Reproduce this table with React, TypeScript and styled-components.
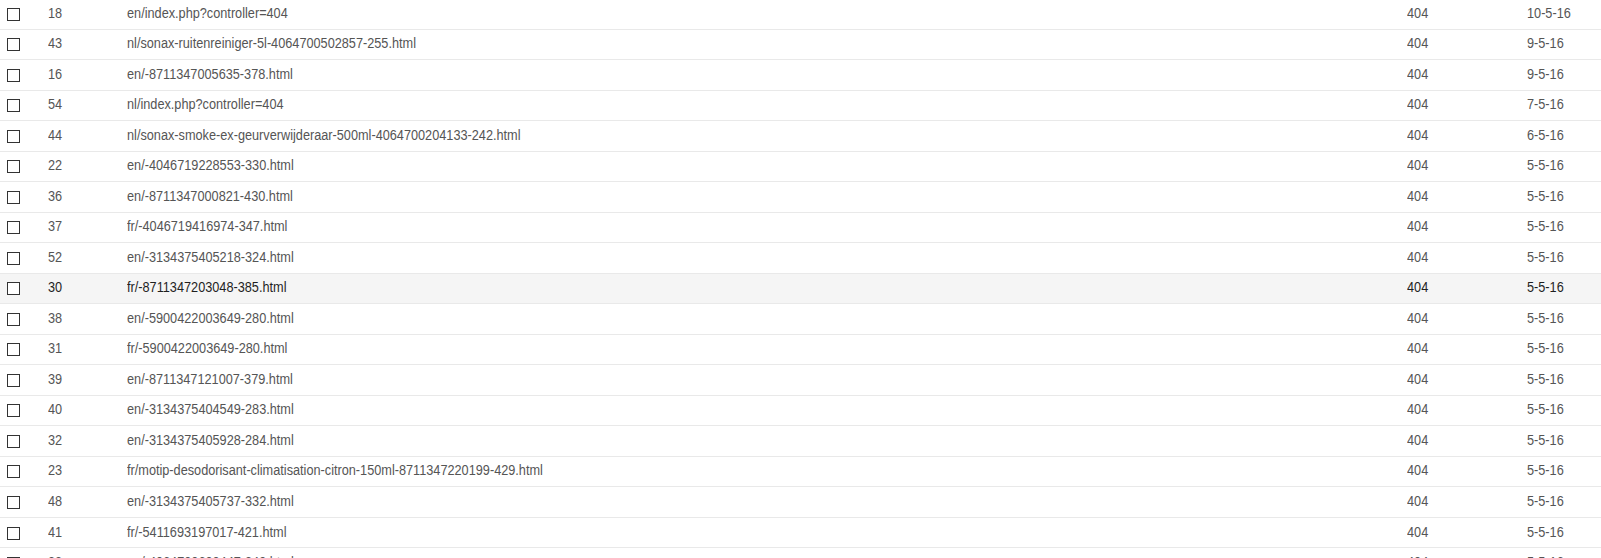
import styled, { createGlobalStyle } from "styled-components";

const GlobalStyle = createGlobalStyle`
  html, body {
    margin: 0;
    padding: 0;
    background: #ffffff;
    overflow: hidden;
  }
  body {
    font-family: "Liberation Sans", Arial, sans-serif;
  }
`;

const Table = styled.div`
  margin-top: -1px;
  width: 1601px;
`;

const Row = styled.div<{ $active?: boolean }>`
  display: grid;
  grid-template-columns: 48px 79px 1280px 120px 1fr;
  align-items: center;
  box-sizing: border-box;
  height: 30.53px;
  border-bottom: 1px solid #e9e9e9;
  background: ${(p) => (p.$active ? "#f5f5f5" : "#ffffff")};
  color: ${(p) => (p.$active ? "#1f1f1f" : "#555555")};
  font-size: 15.5px;
  line-height: 18px;
`;

// the original font is a narrow grotesque, so squeeze the text horizontally
const Cell = styled.div`
  white-space: nowrap;
  padding-bottom: 2px;
  transform: scaleX(0.82);
  transform-origin: left center;
`;

const CheckCell = styled.div`
  display: flex;
  align-items: center;
  padding-left: 7px;
  padding-top: 1px;
`;

const Check = styled.span`
  display: block;
  box-sizing: border-box;
  width: 13px;
  height: 13px;
  border: 1.5px solid #333333;
  background: #ffffff;
`;

type Redirect = {
  id: number;
  url: string;
  code: number;
  date: string;
};

const rows: Redirect[] = [
  { id: 18, url: "en/index.php?controller=404", code: 404, date: "10-5-16" },
  { id: 43, url: "nl/sonax-ruitenreiniger-5l-4064700502857-255.html", code: 404, date: "9-5-16" },
  { id: 16, url: "en/-8711347005635-378.html", code: 404, date: "9-5-16" },
  { id: 54, url: "nl/index.php?controller=404", code: 404, date: "7-5-16" },
  { id: 44, url: "nl/sonax-smoke-ex-geurverwijderaar-500ml-4064700204133-242.html", code: 404, date: "6-5-16" },
  { id: 22, url: "en/-4046719228553-330.html", code: 404, date: "5-5-16" },
  { id: 36, url: "en/-8711347000821-430.html", code: 404, date: "5-5-16" },
  { id: 37, url: "fr/-4046719416974-347.html", code: 404, date: "5-5-16" },
  { id: 52, url: "en/-3134375405218-324.html", code: 404, date: "5-5-16" },
  { id: 30, url: "fr/-8711347203048-385.html", code: 404, date: "5-5-16" },
  { id: 38, url: "en/-5900422003649-280.html", code: 404, date: "5-5-16" },
  { id: 31, url: "fr/-5900422003649-280.html", code: 404, date: "5-5-16" },
  { id: 39, url: "en/-8711347121007-379.html", code: 404, date: "5-5-16" },
  { id: 40, url: "en/-3134375404549-283.html", code: 404, date: "5-5-16" },
  { id: 32, url: "en/-3134375405928-284.html", code: 404, date: "5-5-16" },
  { id: 23, url: "fr/motip-desodorisant-climatisation-citron-150ml-8711347220199-429.html", code: 404, date: "5-5-16" },
  { id: 48, url: "en/-3134375405737-332.html", code: 404, date: "5-5-16" },
  { id: 41, url: "fr/-5411693197017-421.html", code: 404, date: "5-5-16" },
  { id: 33, url: "en/-4064700600447-349.html", code: 404, date: "5-5-16" },
];

export default function App() {
  return (
    <>
      <GlobalStyle />
      <Table>
        {rows.map((r) => (
          <Row key={r.id} $active={r.id === 30}>
            <CheckCell>
              <Check />
            </CheckCell>
            <Cell>{r.id}</Cell>
            <Cell>{r.url}</Cell>
            <Cell>{r.code}</Cell>
            <Cell>{r.date}</Cell>
          </Row>
        ))}
      </Table>
    </>
  );
}
